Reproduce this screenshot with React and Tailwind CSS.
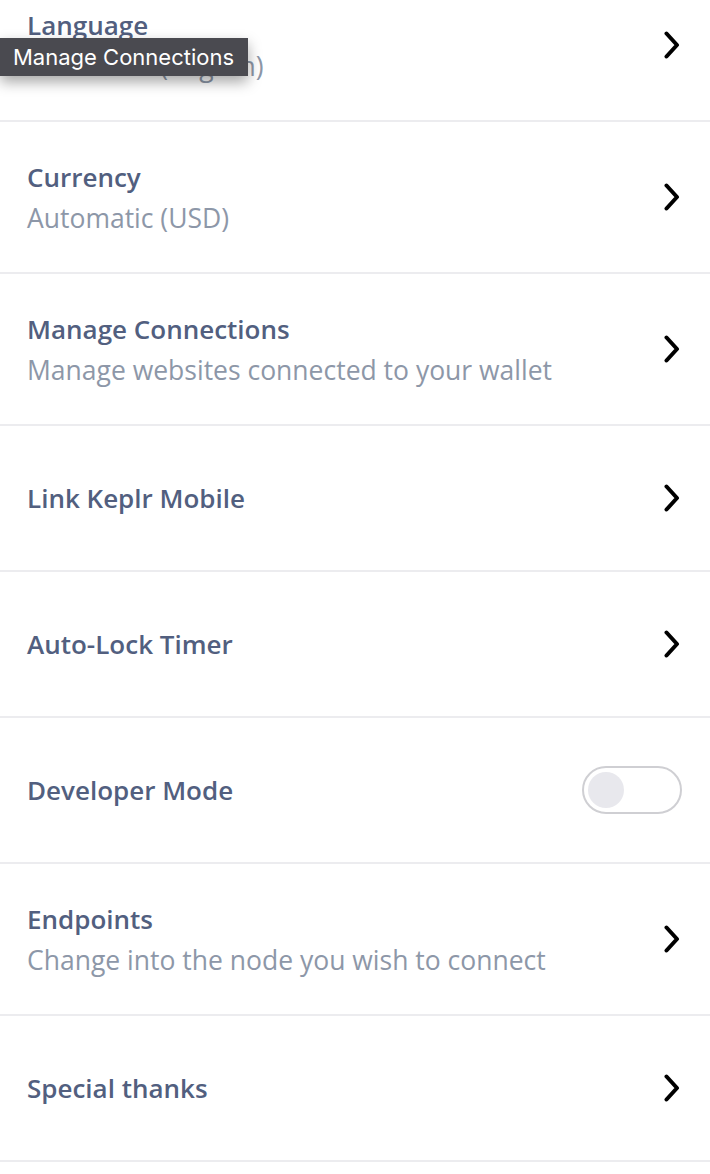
import React from 'react';

const rows = [
    { title: 'Language', subtitle: 'Automatic (English)' },
    { title: 'Currency', subtitle: 'Automatic (USD)' },
    { title: 'Manage Connections', subtitle: 'Manage websites connected to your wallet' },
    { title: 'Link Keplr Mobile' },
    { title: 'Auto-Lock Timer' },
    { title: 'Developer Mode', toggle: true },
    { title: 'Endpoints', subtitle: 'Change into the node you wish to connect' },
    { title: 'Special thanks' },
];

function Chevron() {
    return (
        <svg width="18" height="28" viewBox="0 0 18 28" fill="none">
            <path d="M3.5 2.5 L14 14 L3.5 25.5" stroke="#000" strokeWidth="4" strokeLinecap="round" strokeLinejoin="round" />
        </svg>
    );
}

function Toggle() {
    return (
        <div className="w-[100px] h-[48px] rounded-full border-2 border-[#cfcfd3] bg-white flex items-center px-[4px]">
            <div className="w-[36px] h-[36px] rounded-full bg-[#e8e8ed]" />
        </div>
    );
}

function Row({ title, subtitle, toggle }) {
    return (
        <div className={`flex items-center justify-between pl-[27px] pr-[28px] border-b-2 border-[#ececef] ${subtitle ? 'h-[152px]' : 'h-[146px]'}`}>
            <div className="flex flex-col">
                <div className="text-[26px] leading-[32px] font-semibold text-[#525f7f]">{title}</div>
                {subtitle && (
                    <div className="text-[26.5px] leading-[32px] mt-[9px] text-[#8d97a8]">{subtitle}</div>
                )}
            </div>
            {toggle ? <Toggle /> : <div className="mr-[1px]"><Chevron /></div>}
        </div>
    );
}

export default function App() {
    return (
        <div className="relative w-[710px] h-[1174px] overflow-hidden bg-white" style={{ fontFamily: '"Open Sans", sans-serif' }}>
            <div className="-mt-[30px]">
                {rows.map((r) => (
                    <Row key={r.title} {...r} />
                ))}
            </div>

            {/* tooltip */}
            <div className="absolute left-0 top-[38px] h-[38px] w-[248px] bg-[#4a4a50] text-white text-[22px] leading-[38px] pl-[13px] shadow-[0_6px_14px_rgba(0,0,0,0.35)]" style={{ fontFamily: 'Inter, sans-serif' }}>
                Manage Connections
            </div>
        </div>
    );
}
